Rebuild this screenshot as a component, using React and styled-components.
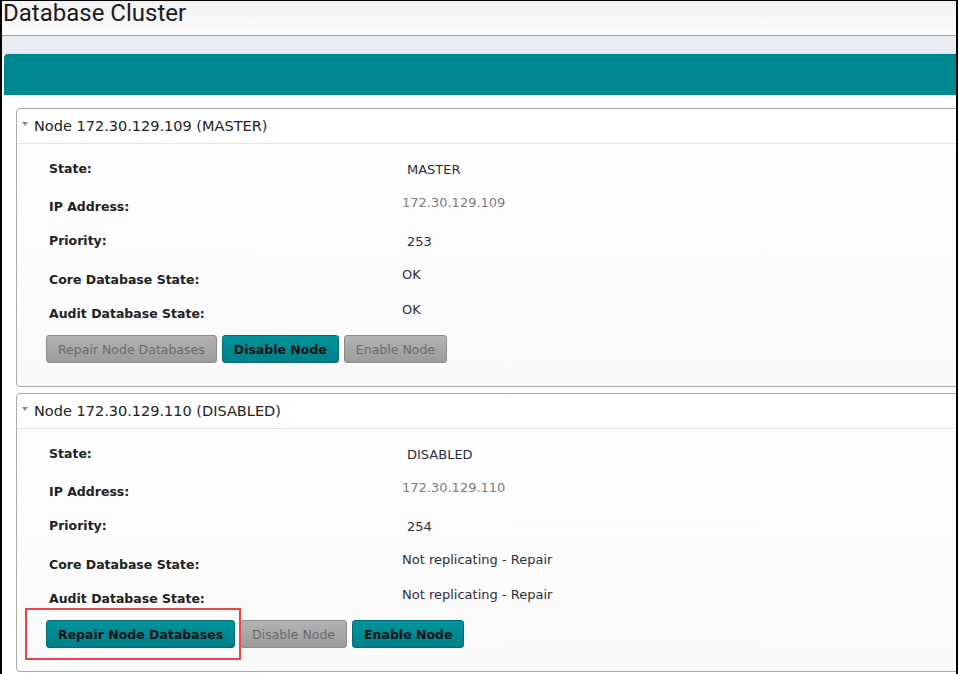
import React from "react";
import styled, { createGlobalStyle } from "styled-components";

const nodes = [
  {
    title: "Node 172.30.129.109 (MASTER)",
    rows: [
      { label: "State:", value: "MASTER", indent: true },
      { label: "IP Address:", value: "172.30.129.109", muted: true },
      { label: "Priority:", value: "253", indent: true },
      { label: "Core Database State:", value: "OK" },
      { label: "Audit Database State:", value: "OK" },
    ],
    buttons: [
      { text: "Repair Node Databases", on: false },
      { text: "Disable Node", on: true },
      { text: "Enable Node", on: false },
    ],
  },
  {
    title: "Node 172.30.129.110 (DISABLED)",
    highlight: true,
    rows: [
      { label: "State:", value: "DISABLED", indent: true },
      { label: "IP Address:", value: "172.30.129.110", muted: true },
      { label: "Priority:", value: "254", indent: true },
      { label: "Core Database State:", value: "Not replicating - Repair" },
      { label: "Audit Database State:", value: "Not replicating - Repair" },
    ],
    buttons: [
      { text: "Repair Node Databases", on: true },
      { text: "Disable Node", on: false },
      { text: "Enable Node", on: true },
    ],
  },
];

// vertical placement of label / value inside each row (row height, label pad, value pad)
const rowMetrics = [
  { h: 34, ly: 10, vy: 11 },
  { h: 34, ly: 14, vy: 10 },
  { h: 34, ly: 14, vy: 15 },
  { h: 34, ly: 19, vy: 14 },
  { h: 34, ly: 19, vy: 15 },
];

export default function App() {
  return (
    <>
      <GlobalStyle />
      <Frame>
        <Header>
          <Title>Database Cluster</Title>
        </Header>
        <Band />
        <Main>
          <MainBar />
          <MainBody>
            {nodes.map((node) => (
              <NodePanel key={node.title}>
                <NodeHead>
                  <Caret />
                  {node.title}
                </NodeHead>
                <NodeBody>
                  {node.rows.map((row, i) => (
                    <Row key={row.label} $h={rowMetrics[i].h}>
                      <Label $pad={rowMetrics[i].ly}>{row.label}</Label>
                      <Value
                        $pad={rowMetrics[i].vy}
                        $indent={row.indent}
                        $muted={row.muted}
                      >
                        {row.value}
                      </Value>
                    </Row>
                  ))}
                  <Buttons>
                    {node.highlight && <Highlight />}
                    {node.buttons.map((b) => (
                      <Button key={b.text} $on={b.on}>
                        {b.text}
                      </Button>
                    ))}
                  </Buttons>
                </NodeBody>
              </NodePanel>
            ))}
          </MainBody>
        </Main>
      </Frame>
    </>
  );
}

const GlobalStyle = createGlobalStyle`
  html, body {
    margin: 0;
    padding: 0;
    background: #fff;
  }
  * { box-sizing: border-box; }
`;

const Frame = styled.div`
  width: 958px;
  height: 674px;
  overflow: hidden;
  border-left: 2px solid #000;
  border-top: 1px solid #000;
  border-right: 2px solid #000;
  background: #fff;
  font-family: "DejaVu Sans", Verdana, sans-serif;
`;

const Header = styled.div`
  height: 35px;
  background: linear-gradient(to bottom, #f1f1f1, #fcfcfc);
  border-bottom: 1px solid #a3a3a3;
  padding-left: 1px;
`;

const Title = styled.h1`
  margin: 0;
  font-family: Roboto, "Noto Sans", sans-serif;
  font-weight: 400;
  font-size: 24px;
  line-height: 24px;
  color: #1c1c1c;
`;

const Band = styled.div`
  height: 18px;
  background: #e9ecf5;
  border-bottom: 1px solid #dde0ea;
`;

const Main = styled.div`
  margin-left: 2px;
`;

const MainBar = styled.div`
  height: 41px;
  background: #008891;
  border-top-left-radius: 4px;
`;

const MainBody = styled.div`
  padding: 13px 0 0 12px;
  margin-right: -12px;
  display: flex;
  flex-direction: column;
  gap: 6px;
`;

const NodePanel = styled.div`
  border: 1px solid #a9a9a9;
  border-radius: 4px;
  height: 279px;
  background: linear-gradient(to bottom, #ffffff, #fafafa);
`;

const NodeHead = styled.div`
  height: 35px;
  display: flex;
  align-items: center;
  padding-left: 5px;
  font-size: 14.5px;
  color: #222;
  border-bottom: 1px solid #e6e6e6;
`;

const Caret = styled.span`
  width: 0;
  height: 0;
  border-left: 3.5px solid transparent;
  border-right: 3.5px solid transparent;
  border-top: 4px solid #8a8a8a;
  margin-right: 6px;
  margin-top: -4px;
`;

const NodeBody = styled.div`
  padding: 7px 0 0 32px;
`;

const Row = styled.div`
  display: grid;
  grid-template-columns: 353px 1fr;
  height: ${(p) => p.$h}px;
  align-items: start;
`;

const Label = styled.div`
  padding-top: ${(p) => p.$pad}px;
  font-size: 12.5px;
  font-weight: bold;
  line-height: 16px;
  color: #222;
`;

const Value = styled.div`
  padding-top: ${(p) => p.$pad}px;
  padding-left: ${(p) => (p.$indent ? 5 : 0)}px;
  font-size: 13px;
  line-height: 16px;
  color: ${(p) => (p.$muted ? "#7d7d7d" : "#2b2f3a")};
`;

const Buttons = styled.div`
  position: relative;
  display: flex;
  gap: 5px;
  margin: 14px 0 0 -3px;
`;

const Highlight = styled.div`
  position: absolute;
  left: -21px;
  top: -12px;
  width: 216px;
  height: 52px;
  border: 2px solid #ef4444;
  pointer-events: none;
`;

const Button = styled.button`
  height: 28px;
  padding: 0 11px;
  border-radius: 3px;
  font-family: "DejaVu Sans", Verdana, sans-serif;
  font-size: 12.5px;
  cursor: pointer;
  font-weight: ${(p) => (p.$on ? "bold" : "normal")};
  color: ${(p) => (p.$on ? "#111" : "#6a6a6a")};
  border: 1px solid ${(p) => (p.$on ? "#006d74" : "#8c8c8c")};
  background: ${(p) =>
    p.$on
      ? "linear-gradient(to bottom, #00949c, #007f88)"
      : "linear-gradient(to bottom, #b3b3b3, #9c9c9c)"};
`;
